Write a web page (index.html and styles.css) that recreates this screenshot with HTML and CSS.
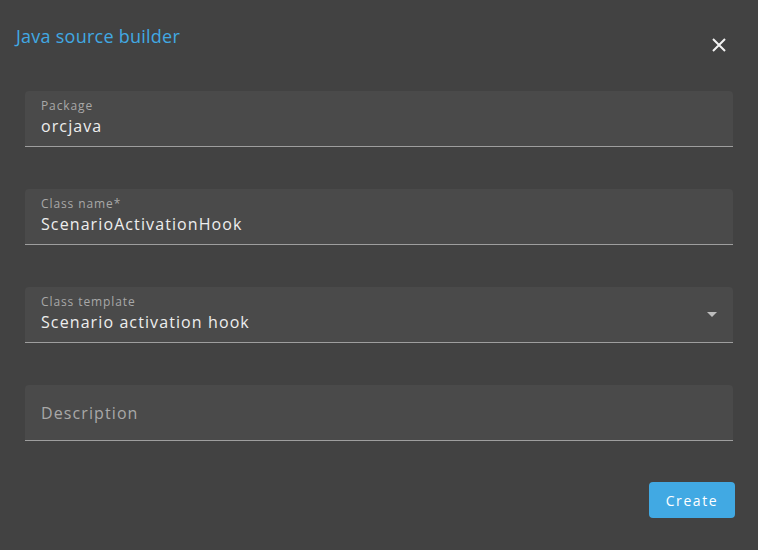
FILE: index.html
```html
<!DOCTYPE html>
<html lang="en">
<head>
    <meta charset="UTF-8">
    <meta name="viewport" content="width=device-width, initial-scale=1.0">
    <title>Java source builder</title>
    <link rel="stylesheet" href="styles.css">
</head>
<body>
    <div class="dialog">
        <div class="dialog-header">
            <h2>Java source builder</h2>
            <button class="close-button" aria-label="Close">
                <svg width="14" height="14" viewBox="0 0 14 14">
                    <path d="M1 1 L13 13 M13 1 L1 13" stroke="#f2f2f2" stroke-width="2" fill="none"/>
                </svg>
            </button>
        </div>

        <form class="source-form">
            <div class="field">
                <label>Package</label>
                <div class="field-value">orcjava</div>
            </div>
            <div class="field">
                <label>Class name*</label>
                <div class="field-value">ScenarioActivationHook</div>
            </div>
            <div class="field select">
                <label>Class template</label>
                <div class="field-value">Scenario activation hook</div>
                <span class="arrow"></span>
            </div>
            <div class="field empty">
                <div class="placeholder">Description</div>
            </div>
            <div class="actions">
                <button type="button" class="create-button">Create</button>
            </div>
        </form>
    </div>
</body>
</html>
```

FILE: styles.css
```css
:root {
    --bg-color: #424242;
    --field-bg: #4a4a4a;
    --line-color: #9e9e9e;
    --primary-color: #41a9e3;
    --text-color: #eeeeee;
    --label-color: #a8a8a8;
}

* {
    margin: 0;
    padding: 0;
    box-sizing: border-box;
    font-family: 'Open Sans', 'DejaVu Sans', sans-serif;
}

body {
    background-color: var(--bg-color);
    color: var(--text-color);
    width: 758px;
    height: 550px;
    overflow: hidden;
}

.dialog {
    padding: 24px 23px 0 25px;
}

.dialog-header {
    display: flex;
    justify-content: space-between;
    height: 67px;
}

.dialog-header h2 {
    color: var(--primary-color);
    font-size: 18px;
    font-weight: 400;
    line-height: 24px;
    margin-left: -9px;
    letter-spacing: 0.25px;
}

.close-button {
    background: none;
    border: none;
    cursor: pointer;
    margin-top: 14px;
    margin-right: 9px;
    width: 14px;
    height: 14px;
}

.source-form {
    display: flex;
    flex-direction: column;
    gap: 42px;
    width: 708px;
}

.field {
    position: relative;
    height: 56px;
    background-color: var(--field-bg);
    border-radius: 4px 4px 0 0;
    border-bottom: 1px solid var(--line-color);
    padding: 8px 16px 0;
}

.field label {
    display: block;
    color: var(--label-color);
    font-size: 12px;
    line-height: 14px;
    letter-spacing: 0.9px;
}

.field-value {
    font-size: 16px;
    line-height: 24px;
    letter-spacing: 1.1px;
    padding-top: 1px;
}

.placeholder {
    color: var(--label-color);
    font-size: 16px;
    line-height: 40px;
    letter-spacing: 1.1px;
}

.arrow {
    position: absolute;
    right: 16px;
    top: 25px;
    border-left: 5px solid transparent;
    border-right: 5px solid transparent;
    border-top: 5px solid #bdbdbd;
}

.actions {
    display: flex;
    justify-content: flex-end;
    margin-top: -1px;
    margin-right: -2px;
}

.create-button {
    width: 86px;
    height: 36px;
    background-color: var(--primary-color);
    color: #ffffff;
    border: none;
    border-radius: 4px;
    font-size: 14px;
    font-weight: 500;
    letter-spacing: 1.6px;
    cursor: pointer;
}
```
